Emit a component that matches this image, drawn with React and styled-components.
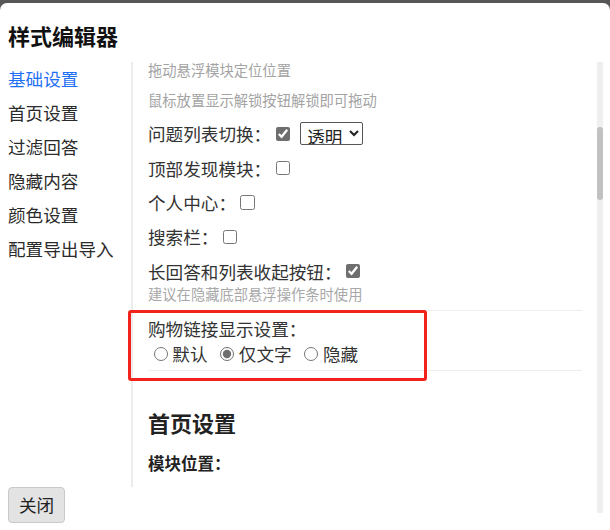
import React, { useLayoutEffect, useRef, useState } from 'react';
import styled, { createGlobalStyle } from 'styled-components';

const GlobalStyle = createGlobalStyle`
html, body{
    margin:0;
    padding:0;
    background-color:#575757;
    font-family:"Noto Sans CJK SC", "Noto Sans", sans-serif;
}
`;

const Dialog = styled.div`
position:relative;
margin-top:3px;
height:527px;
background-color:#fff;
border-radius:7px 7px 0 0;
display:flex;
flex-direction:column;
overflow:hidden;
`;

const Title = styled.h1`
margin:0;
padding:17px 8px 0;
font-size:22px;
line-height:30px;
font-weight:700;
color:#111;
`;

const Body = styled.div`
display:flex;
align-items:flex-start;
margin-top:12px;
padding:0 7px 0 8px;
height:425px;
`;

const Nav = styled.ul`
list-style:none;
margin:0;
padding:0;
width:123px;
flex-shrink:0;
`;

const NavItem = styled.li`
height:34px;
line-height:34px;
font-size:17.6px;
color:${p => (p.$active ? '#1f6ff5' : '#2b2b2b')};
cursor:pointer;
white-space:nowrap;
`;

const Pane = styled.div`
flex:1;
height:425px;
overflow:hidden;
border-left:2px solid #ececec;
padding:0 15px 0 15px;
box-sizing:border-box;
`;

const Track = styled.div`
width:6px;
height:451px;
flex-shrink:0;
background:#efefef;
`;

const Thumb = styled.div`
width:6px;
background:#c1c1c1;
border-radius:3px;
`;

const SectionTitle = styled.h3`
margin:${p => p.$top || '16px'} 0 0;
font-size:22px;
line-height:30px;
font-weight:700;
color:#222;
`;

const SubTitle = styled.h4`
margin:15px 0 20px;
font-size:16.5px;
line-height:22px;
font-weight:700;
color:#222;
`;

const HintGroup = styled.div`
padding-top:0;
`;

const Hint = styled.p`
margin:0;
font-size:14.3px;
line-height:16px;
color:#a3a3a3;

& + &{
    margin-top:14px;
}
`;

const Group = styled.div`
padding:${p => p.$pad || '9px 0 8px'};
border-bottom:1px solid #eee;
`;

const Row = styled.div`
display:flex;
align-items:center;
height:34.3px;
font-size:17.6px;
color:#333;
white-space:nowrap;
`;

const Note = styled.div`
margin-top:-2px;
font-size:14.3px;
line-height:16px;
color:#a8a8a8;
`;

const Check = styled.input.attrs({ type: 'checkbox' })`
width:14.3px;
height:14.3px;
margin:3.3px 3.3px 3.3px 4.4px;
accent-color:#6e6e6e;
`;

const Select = styled.select`
margin-left:7px;
width:63px;
height:23px;
font-family:inherit;
font-size:17.6px;
line-height:20px;
padding:0 2px;
border:1px solid #555;
border-radius:2px;
color:#222;
background:#fff;
`;

const Label = styled.div`
font-size:17.6px;
line-height:22px;
color:#333;
`;

const RadioRow = styled.div`
display:flex;
align-items:center;
margin-top:1px;
height:24px;
font-size:17.6px;
color:#333;
`;

const RadioLabel = styled.label`
display:flex;
align-items:center;
margin-right:7px;
`;

const Radio = styled.input.attrs({ type: 'radio' })`
width:14.3px;
height:14.3px;
margin:1px 4.5px 0 5.5px;
accent-color:#6e6e6e;
`;

const Footer = styled.div`
padding:0 8px;
`;

const CloseButton = styled.button`
font-family:inherit;
font-size:17.6px;
line-height:24px;
padding:5px 10px;
border:1px solid #c9c9c9;
border-radius:4px;
background-color:#e3e3e3;
color:#222;
cursor:pointer;
`;

const Marker = styled.div`
position:absolute;
top:307px;
left:128px;
width:293px;
height:65px;
border:3px solid #f2231c;
border-radius:3px;
pointer-events:none;
`;

const navItems = ['基础设置', '首页设置', '过滤回答', '隐藏内容', '颜色设置', '配置导出导入'];

const basicRows = ['显示模式：', '页面宽度：', '字体大小：', '隐藏标题栏：', '回到顶部按钮：', '悬浮模块：', '列表卡片样式：', '图片尺寸：', '悬浮模块位置：'];

const laterSections = [
    { title: null, rows: ['首页列表：', '推荐：', '关注：', '热榜：', '视频：', '圈子：', '问题列表：', '右侧栏：'] },
    { title: '过滤回答', rows: ['屏蔽关键词：', '屏蔽用户：', '屏蔽话题：', '过滤广告：', '过滤视频：', '过滤盐选：', '过滤付费：', '过滤低赞：', '过滤匿名：', '过滤营销号：'] },
    { title: '隐藏内容', rows: ['隐藏图片：', '隐藏视频：', '隐藏签名：', '隐藏头像：', '隐藏标签：', '隐藏评论：', '隐藏赞同：', '隐藏时间：', '隐藏推荐：', '隐藏热榜：', '隐藏侧栏：', '隐藏页脚：'] },
    { title: '颜色设置', rows: ['背景色：', '文字颜色：', '链接颜色：', '夜间模式：', '护眼模式：', '主题色：'] },
    { title: '配置导出导入', rows: ['导出配置：', '导入配置：', '恢复默认：', '同步设置：', '备份：', '清空缓存：'] },
];

export default function App(){
    const paneRef = useRef(null);
    const anchorRef = useRef(null);
    const [thumb, setThumb] = useState({ top: 65, height: 73 });

    useLayoutEffect(() => {
        const pane = paneRef.current;
        const anchor = anchorRef.current;
        if (!pane || !anchor) return;
        pane.scrollTop = anchor.getBoundingClientRect().top - pane.getBoundingClientRect().top;
        const track = pane.clientHeight;
        setThumb({
            top: (pane.scrollTop / pane.scrollHeight) * track,
            height: (pane.clientHeight / pane.scrollHeight) * track,
        });
    }, []);

    return(
        <>
            <GlobalStyle />
            <Dialog>
                <Title>样式编辑器</Title>
                <Body>
                    <Nav>
                        {navItems.map((item, i) => (
                            <NavItem key={item} $active={i === 0}>{item}</NavItem>
                        ))}
                    </Nav>
                    <Pane ref={paneRef}>
                        <SectionTitle>基础设置</SectionTitle>
                        <div style={{ height: 10 }} />
                        {basicRows.map(r => (
                            <Row key={r}>{r}<Check /></Row>
                        ))}
                        <div style={{ height: 13 }} />

                        <HintGroup ref={anchorRef}>
                            <Hint>拖动悬浮模块定位位置</Hint>
                            <Hint>鼠标放置显示解锁按钮解锁即可拖动</Hint>
                        </HintGroup>

                        <Group>
                            <Row>
                                问题列表切换：<Check defaultChecked />
                                <Select defaultValue="透明">
                                    <option>透明</option>
                                    <option>默认</option>
                                </Select>
                            </Row>
                            <Row>顶部发现模块：<Check /></Row>
                            <Row>个人中心：<Check /></Row>
                            <Row>搜索栏：<Check /></Row>
                            <Row>长回答和列表收起按钮：<Check defaultChecked /></Row>
                            <Note>建议在隐藏底部悬浮操作条时使用</Note>
                        </Group>

                        <Group $pad="7px 0 5px">
                            <Label>购物链接显示设置：</Label>
                            <RadioRow>
                                <RadioLabel><Radio name="shop" />默认</RadioLabel>
                                <RadioLabel><Radio name="shop" defaultChecked />仅文字</RadioLabel>
                                <RadioLabel><Radio name="shop" />隐藏</RadioLabel>
                            </RadioRow>
                        </Group>

                        <SectionTitle $top="36px">首页设置</SectionTitle>
                        <SubTitle>模块位置：</SubTitle>

                        {laterSections.map((s, i) => (
                            <div key={i}>
                                {s.title && <SectionTitle $top="26px">{s.title}</SectionTitle>}
                                {s.rows.map(r => (
                                    <Row key={r}>{r}<Check /></Row>
                                ))}
                            </div>
                        ))}
                    </Pane>
                    <Track>
                        <Thumb style={{ marginTop: thumb.top, height: thumb.height }} />
                    </Track>
                </Body>
                <Footer>
                    <CloseButton>关闭</CloseButton>
                </Footer>
                <Marker />
            </Dialog>
        </>
    )
}
